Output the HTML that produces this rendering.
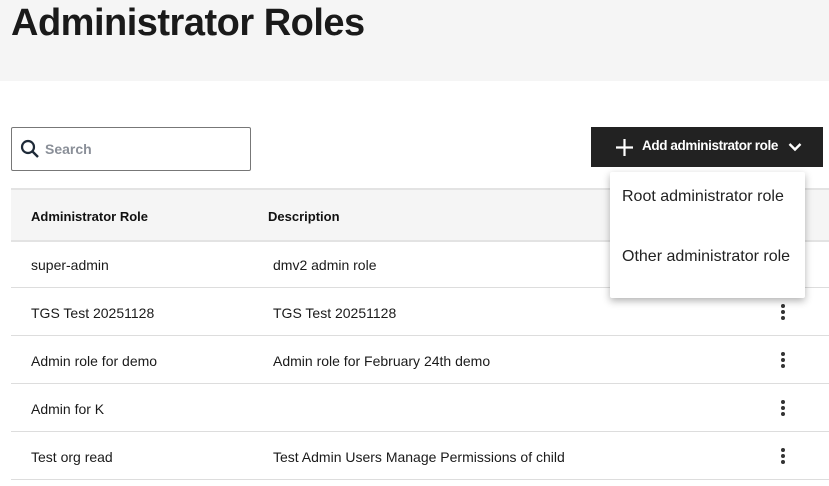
<!DOCTYPE html><html><head><style>
body{margin:0;width:829px;height:486px;overflow:hidden;font-family:"Liberation Sans",Arial,sans-serif;background:#fff;color:#111}
.hdr{position:absolute;left:0;top:0;width:829px;height:81px;background:#f5f5f5}
.hdr h1{position:absolute;left:11px;top:2px;margin:0;font-size:38px;font-weight:bold;color:#1a1a1a;letter-spacing:-0.5px}
.search{position:absolute;left:11px;top:127px;width:238px;height:42px;border:1px solid #777;border-radius:2px}
.search span{position:absolute;left:33px;top:13px;font-size:14px;color:#8a8f98;font-weight:bold}
.btn{position:absolute;left:591px;top:127px;width:232px;height:40px;background:#222;color:#fff;font-size:13.5px;font-weight:bold}
.btn span{position:absolute;left:51px;top:11px;letter-spacing:-0.4px}
.th{position:absolute;left:11px;top:188px;width:818px;height:50px;background:#f5f5f5;border-top:2px solid #e3e3e3;border-bottom:2px solid #e3e3e3;font-size:13px;font-weight:bold}
.row{position:absolute;left:11px;width:818px;height:47px;border-bottom:1px solid #ddd;font-size:14px;color:#1a1a1a}
.c1{position:absolute;left:20px;top:17px}.c2{position:absolute;left:262px;top:17px}
.keb{position:absolute;left:770px;top:16px;width:4px}
.keb i{display:block;width:4px;height:4px;border-radius:2px;background:#333;margin-bottom:2px}
.menu{position:absolute;left:610px;top:172px;width:195px;height:126px;background:#fff;box-shadow:0 3px 8px rgba(0,0,0,.3);border-radius:2px;font-size:16px;color:#222}
.menu div{position:absolute;left:12px}
</style></head><body>
<div class="hdr"><h1>Administrator Roles</h1></div>
<div class="search"><svg style="position:absolute;left:8px;top:11px" width="20" height="20" viewBox="0 0 20 20"><circle cx="8" cy="8" r="6" fill="none" stroke="#1e2a38" stroke-width="2.2"/><path d="M12.5 12.5L18 18" stroke="#1e2a38" stroke-width="2.4"/></svg><span>Search</span></div>
<div class="btn"><svg style="position:absolute;left:25px;top:12px" width="17" height="17"><path d="M8.5 0V17M0 8.5H17" stroke="#fff" stroke-width="2.2"/></svg><span>Add administrator role</span><svg style="position:absolute;left:197px;top:15px" width="14" height="10"><path d="M1.5 2L7 7.5 12.5 2" fill="none" stroke="#fff" stroke-width="2.4"/></svg></div>
<div class="th"><div style="position:absolute;left:20px;top:19px">Administrator Role</div><div style="position:absolute;left:257px;top:19px">Description</div></div>
<div class="row" style="top:240px"><div class="c1">super-admin</div><div class="c2">dmv2 admin role</div></div>
<div class="row" style="top:288px"><div class="c1">TGS Test 20251128</div><div class="c2">TGS Test 20251128</div><div class="keb"><i></i><i></i><i></i></div></div>
<div class="row" style="top:336px"><div class="c1">Admin role for demo</div><div class="c2">Admin role for February 24th demo</div><div class="keb"><i></i><i></i><i></i></div></div>
<div class="row" style="top:384px"><div class="c1">Admin for K</div><div class="keb"><i></i><i></i><i></i></div></div>
<div class="row" style="top:432px"><div class="c1">Test org read</div><div class="c2">Test Admin Users Manage Permissions of child</div><div class="keb"><i></i><i></i><i></i></div></div>
<div class="menu"><div style="top:16px">Root administrator role</div><div style="top:76px">Other administrator role</div></div>
</body></html>
